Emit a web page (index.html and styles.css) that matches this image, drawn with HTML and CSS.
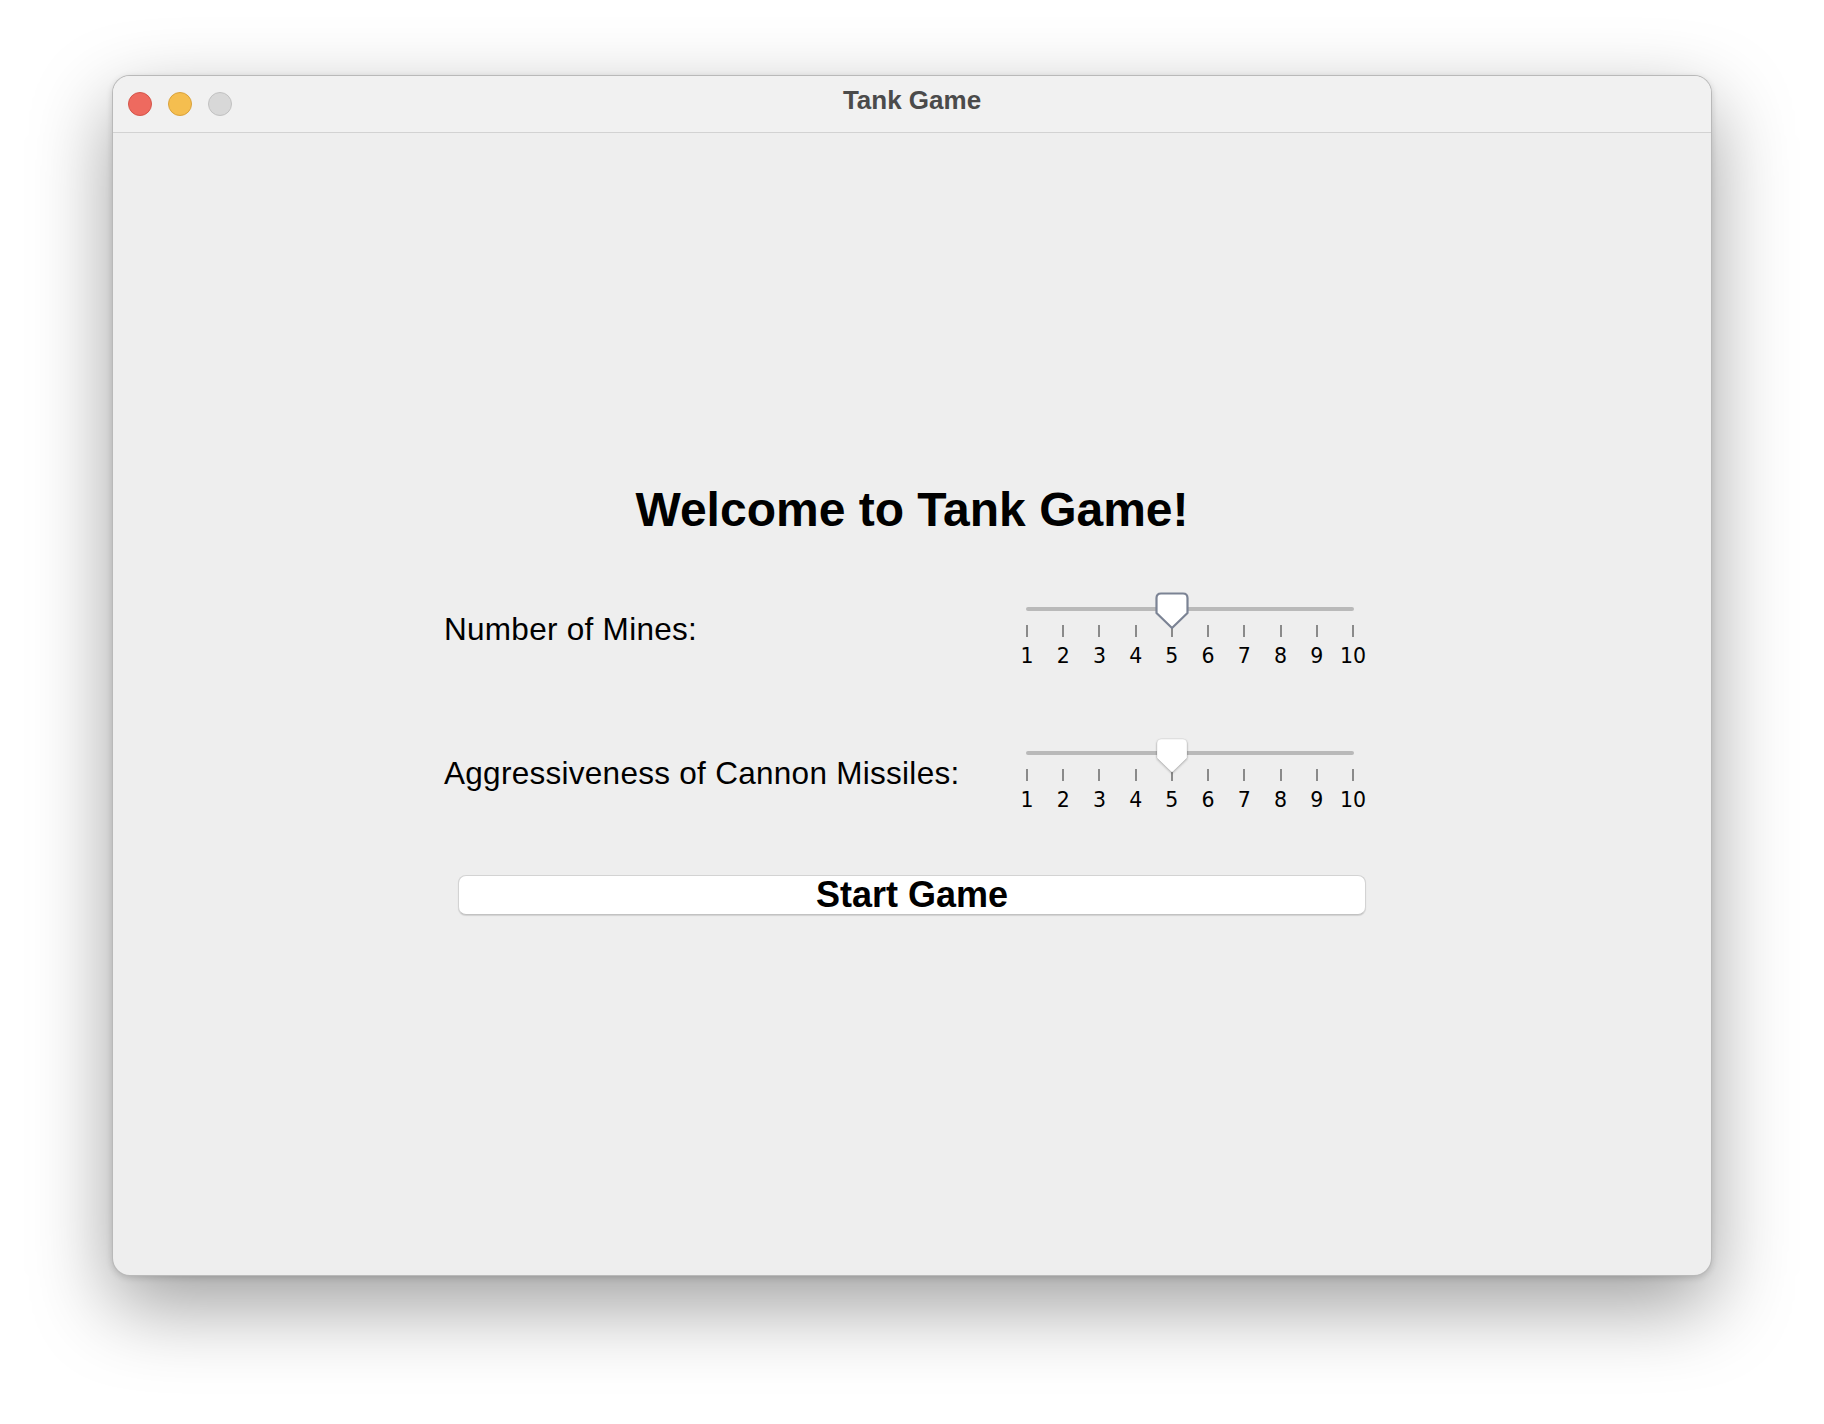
FILE: index.html
```html
<!DOCTYPE html>
<html lang="en">
<head>
<meta charset="utf-8">
<title>Tank Game</title>
<link rel="stylesheet" href="styles.css">
</head>
<body>
<div class="desktop">
  <div class="window">
    <div class="titlebar">
      <div class="lights">
        <span class="light red"></span>
        <span class="light yellow"></span>
        <span class="light gray"></span>
      </div>
      <div class="title">Tank Game</div>
      <div></div>
    </div>
    <div class="content">
      <h1 class="heading">Welcome to Tank Game!</h1>
      <div class="form">
        <div class="row">
          <div class="label">Number of Mines:</div>
          <div class="slider">
            <div class="track-area">
              <div class="track"></div>
              <svg class="thumb" width="34" height="38" viewBox="0 0 34 38">
                <path d="M6 1.5 H28 Q32.5 1.5 32.5 6 V21 L17 36 L1.5 21 V6 Q1.5 1.5 6 1.5 Z" fill="#ffffff" stroke="#7b8394" stroke-width="2.2" stroke-linejoin="round"/>
              </svg>
            </div>
            <div class="ticks">
              <div class="tick"><span class="mark"></span><span class="num">1</span></div>
              <div class="tick"><span class="mark"></span><span class="num">2</span></div>
              <div class="tick"><span class="mark"></span><span class="num">3</span></div>
              <div class="tick"><span class="mark"></span><span class="num">4</span></div>
              <div class="tick"><span class="mark"></span><span class="num">5</span></div>
              <div class="tick"><span class="mark"></span><span class="num">6</span></div>
              <div class="tick"><span class="mark"></span><span class="num">7</span></div>
              <div class="tick"><span class="mark"></span><span class="num">8</span></div>
              <div class="tick"><span class="mark"></span><span class="num">9</span></div>
              <div class="tick"><span class="mark"></span><span class="num">10</span></div>
            </div>
          </div>
        </div>
        <div class="row row-second">
          <div class="label">Aggressiveness of Cannon Missiles:</div>
          <div class="slider">
            <div class="track-area">
              <div class="track"></div>
              <svg class="thumb thumb-plain" width="34" height="38" viewBox="0 0 34 38">
                <path d="M6 2 H28 Q32 2 32 6 V21 L17 35.5 L2 21 V6 Q2 2 6 2 Z" fill="#ffffff" stroke="rgba(0,0,0,0.10)" stroke-width="0.8" stroke-linejoin="round"/>
              </svg>
            </div>
            <div class="ticks">
              <div class="tick"><span class="mark"></span><span class="num">1</span></div>
              <div class="tick"><span class="mark"></span><span class="num">2</span></div>
              <div class="tick"><span class="mark"></span><span class="num">3</span></div>
              <div class="tick"><span class="mark"></span><span class="num">4</span></div>
              <div class="tick"><span class="mark"></span><span class="num">5</span></div>
              <div class="tick"><span class="mark"></span><span class="num">6</span></div>
              <div class="tick"><span class="mark"></span><span class="num">7</span></div>
              <div class="tick"><span class="mark"></span><span class="num">8</span></div>
              <div class="tick"><span class="mark"></span><span class="num">9</span></div>
              <div class="tick"><span class="mark"></span><span class="num">10</span></div>
            </div>
          </div>
        </div>
        <div class="actions">
          <button class="start" type="button">Start Game</button>
        </div>
      </div>
    </div>
  </div>
</div>
</body>
</html>
```
FILE: styles.css
```css
* { box-sizing: border-box; }

html, body {
  margin: 0;
  padding: 0;
  background: #ffffff;
  font-family: "Liberation Sans", Arial, sans-serif;
}

.desktop {
  padding: 75px 0 0 112px;
  height: 1424px;
}

.window {
  width: 1600px;
  height: 1201px;
  border: 1px solid rgba(0, 0, 0, 0.22);
  border-radius: 18px;
  background: #eeeeee;
  overflow: hidden;
  box-shadow: 0 30px 80px rgba(0, 0, 0, 0.38), 0 2px 6px rgba(0, 0, 0, 0.14);
  display: flex;
  flex-direction: column;
}

.titlebar {
  height: 57px;
  flex: none;
  background: #f1f1f1;
  border-bottom: 1px solid #d2d2d2;
  display: grid;
  grid-template-columns: 1fr auto 1fr;
  align-items: center;
}

.lights {
  display: flex;
  gap: 16px;
  padding-left: 15px;
  padding-bottom: 1px;
}

.light {
  width: 24px;
  height: 24px;
  border-radius: 50%;
  display: block;
}
.light.red { background: #ee6a5f; border: 1px solid #d4554a; }
.light.yellow { background: #f5be4f; border: 1px solid #d9a23c; }
.light.gray { background: #d8d8d8; border: 1px solid #c1c1c1; }

.title {
  font-family: "Liberation Sans", Arial, sans-serif;
  font-weight: bold;
  font-size: 26px;
  color: #4b4b4b;
  line-height: 49px;
  padding-bottom: 7px;
}

.content {
  flex: 1;
  padding-top: 353px;
  display: flex;
  flex-direction: column;
  align-items: center;
}

.heading {
  margin: 0;
  font-size: 48px;
  line-height: 48px;
  font-weight: bold;
  color: #000;
  text-align: center;
}

.form {
  width: 936px;
  margin-top: 56px;
}

.row {
  display: flex;
  justify-content: space-between;
  align-items: flex-start;
}

.row-second {
  margin-top: 68px;
}

.label {
  font-size: 31.5px;
  line-height: 32px;
  letter-spacing: 0.28px;
  color: #000;
  margin-top: 23px;
}

.slider {
  width: 370px;
  padding: 0 27px 0 17px;
}

.track-area {
  position: relative;
  height: 35px;
}

.track {
  position: relative;
  top: 17px;
  height: 4px;
  margin: 0 -1px;
  border-radius: 2px;
  background: #b9b9b9;
}

.thumb {
  position: absolute;
  top: 2px;
  left: calc(44.444% - 17px);
}

.thumb-plain {
  top: 3px;
  filter: drop-shadow(0 1px 1.2px rgba(0, 0, 0, 0.28));
}

.ticks {
  display: flex;
  justify-content: space-between;
}

.tick {
  width: 0;
  display: flex;
  flex-direction: column;
  align-items: center;
}

.mark {
  display: block;
  width: 2px;
  height: 12px;
  background: #8a8a8a;
  flex: none;
}

.num {
  display: block;
  margin-top: 9px;
  font-family: "DejaVu Sans", "Liberation Sans", sans-serif;
  font-size: 20.5px;
  line-height: 20px;
  color: #000;
  white-space: nowrap;
}

.actions {
  display: flex;
  justify-content: center;
  margin-top: 65px;
}

.start {
  width: 908px;
  height: 40px;
  border: 1px solid #d3d3d3;
  border-bottom-color: #c2c2c2;
  border-radius: 8px;
  background: #ffffff;
  box-shadow: 0 1px 1px rgba(0, 0, 0, 0.12);
  font-family: "Liberation Sans", Arial, sans-serif;
  font-weight: bold;
  font-size: 36px;
  line-height: 34px;
  padding: 2px 0 2px 0;
  color: #000;
  cursor: default;
}
```
